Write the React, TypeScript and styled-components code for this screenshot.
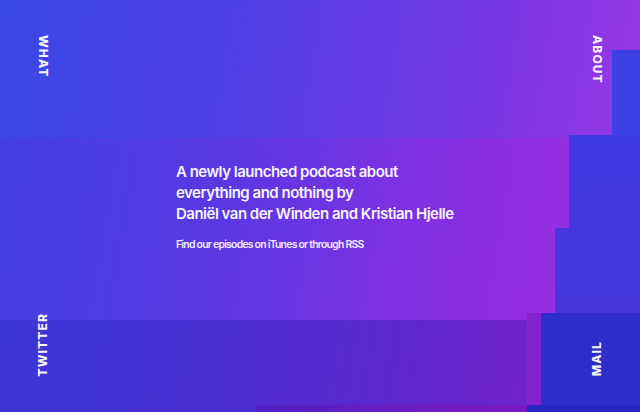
import React from "react";
import styled, { createGlobalStyle } from "styled-components";

const Global = createGlobalStyle`
  html, body { margin: 0; padding: 0; background: #3b3fe0; }
  body { font-family: Inter, "Liberation Sans", Arial, sans-serif; -webkit-font-smoothing: antialiased; }
  * { box-sizing: border-box; }
`;

const Page = styled.main`
  position: relative;
  width: 640px;
  height: 412px;
  overflow: hidden;
  color: #f6f2ff;
`;

/* decorative background bands */
const Backdrop = styled.div`
  position: absolute;
  inset: 0;
  display: flex;
  flex-direction: column;
  z-index: 0;
`;

const Band = styled.div<{ $h: number; $bg: string }>`
  flex: 0 0 ${(p) => p.$h}px;
  background: ${(p) => p.$bg};
`;

/* glitch overlay blocks stacked on the right edge */
const Glitch = styled.div`
  position: absolute;
  inset: 0;
  display: flex;
  flex-direction: column;
  align-items: flex-end;
  z-index: 1;
  pointer-events: none;
`;

const Step = styled.div<{ $h: number }>`
  flex: 0 0 ${(p) => p.$h}px;
  display: flex;
`;

const Segment = styled.div<{ $w: number; $bg: string }>`
  width: ${(p) => p.$w}px;
  height: 100%;
  background: ${(p) => p.$bg};
`;

const Content = styled.div`
  position: relative;
  z-index: 2;
  height: 100%;
  display: grid;
  grid-template-columns: 86px 1fr 86px;
`;

const Side = styled.nav`
  display: flex;
  flex-direction: column;
  justify-content: space-between;
  align-items: center;
  padding: 35px 0 36px;
`;

const NavLink = styled.a<{ $up?: boolean }>`
  writing-mode: vertical-rl;
  transform: ${(p) => (p.$up ? "rotate(180deg)" : "none")};
  font-size: 12px;
  font-weight: 800;
  letter-spacing: 1.1px;
  line-height: 14px;
  color: #f6f2ff;
  text-decoration: none;
`;

const Intro = styled.section`
  display: flex;
  flex-direction: column;
  justify-content: center;
  padding: 0 0 0 90px;
`;

const Headline = styled.h1`
  margin: 0;
  font-size: 15px;
  line-height: 21px;
  font-weight: 600;
  letter-spacing: -0.5px;
  color: #f6f2ff;
`;

const Note = styled.p`
  margin: 14px 0 0;
  font-size: 10.5px;
  line-height: 14px;
  font-weight: 600;
  letter-spacing: -0.8px;
  color: #f0ebff;
`;

const steps: { h: number; segs: { w: number; bg: string }[] }[] = [
  { h: 50, segs: [] },
  { h: 85, segs: [{ w: 28, bg: "#3c40e2" }] },
  { h: 93, segs: [{ w: 71, bg: "linear-gradient(180deg,#3e3de2,#4338de)" }] },
  { h: 85, segs: [{ w: 85, bg: "linear-gradient(180deg,#4338de,#4636da)" }] },
  {
    h: 92,
    segs: [
      { w: 14, bg: "#8322d0" },
      { w: 99, bg: "#2e2ecc" },
    ],
  },
  {
    h: 7,
    segs: [
      { w: 270, bg: "linear-gradient(90deg,#5220c4,#7a18c2)" },
      { w: 113, bg: "#2626c2" },
    ],
  },
];

export default function App() {
  return (
    <Page>
      <Global />
      <Backdrop>
        <Band
          $h={138}
          $bg="linear-gradient(100deg,#3a48e6 0%,#4e3fe4 35%,#7337e4 72%,#9836e6 100%)"
        />
        <Band
          $h={182}
          $bg="linear-gradient(100deg,#4240e2 0%,#5a38e2 35%,#8a2ee2 72%,#a02ee2 100%)"
        />
        <Band
          $h={92}
          $bg="linear-gradient(100deg,#3a36d4 0%,#4a2ed2 35%,#6424cc 70%,#7e20c8 100%)"
        />
      </Backdrop>
      <Glitch>
        {steps.map((s, i) => (
          <Step key={i} $h={s.h}>
            {s.segs.map((g, j) => (
              <Segment key={j} $w={g.w} $bg={g.bg} />
            ))}
          </Step>
        ))}
      </Glitch>
      <Content>
        <Side>
          <NavLink href="#what">WHAT</NavLink>
          <NavLink href="#twitter" $up>
            TWITTER
          </NavLink>
        </Side>
        <Intro>
          <Headline>
            A newly launched podcast about
            <br />
            everything and nothing by
            <br />
            Daniël van der Winden and Kristian Hjelle
          </Headline>
          <Note>Find our episodes on iTunes or through RSS</Note>
        </Intro>
        <Side>
          <NavLink href="#about">ABOUT</NavLink>
          <NavLink href="#mail" $up>
            MAIL
          </NavLink>
        </Side>
      </Content>
    </Page>
  );
}
